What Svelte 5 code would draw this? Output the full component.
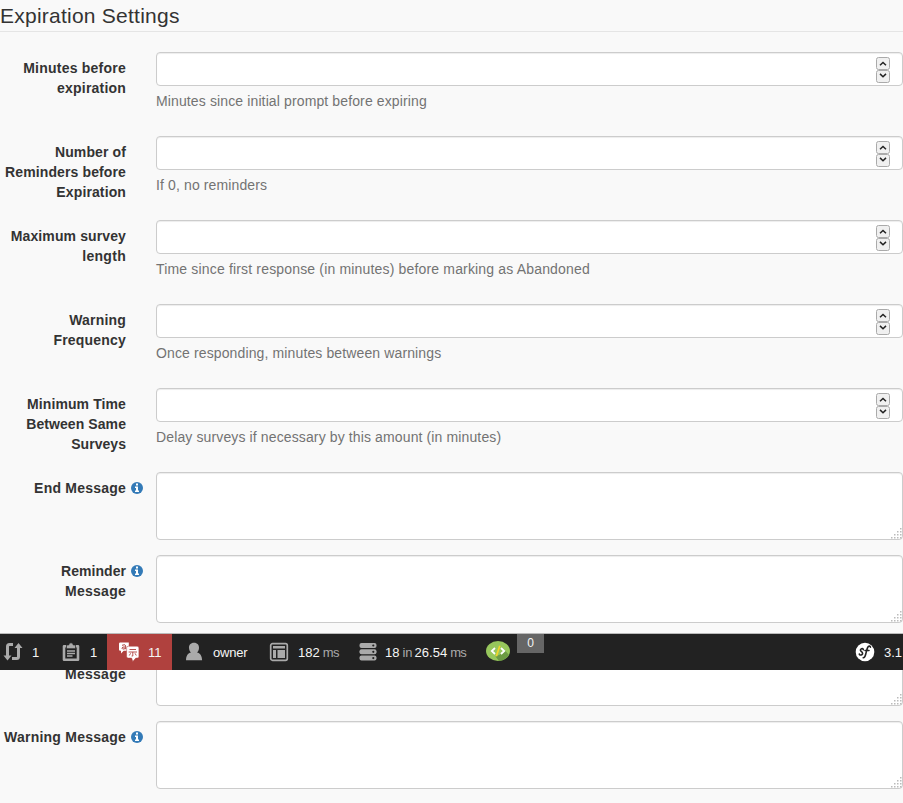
<script>
  const numbers = [
    { label: ['Minutes before', 'expiration'], help: 'Minutes since initial prompt before expiring' },
    { label: ['Number of', 'Reminders before', 'Expiration'], help: 'If 0, no reminders' },
    { label: ['Maximum survey', 'length'], help: 'Time since first response (in minutes) before marking as Abandoned' },
    { label: ['Warning', 'Frequency'], help: 'Once responding, minutes between warnings' },
    { label: ['Minimum Time', 'Between Same', 'Surveys'], help: 'Delay surveys if necessary by this amount (in minutes)' }
  ];
  const messages = [
    { label: ['End Message'], info: true },
    { label: ['Reminder', 'Message'], info: true },
    { label: ['\u00a0', 'Message'], info: false },
    { label: ['Warning Message'], info: true }
  ];
  const tracking = {
    'Minutes before': 0.23, 'expiration': 0.2, 'Number of': 0.12, 'Reminders before': 0.12,
    'Expiration': 0.12, 'Maximum survey': 0.12, 'length': 0.3, 'Warning': 0.2, 'Frequency': 0.2,
    'Minimum Time': 0.1, 'Between Same': 0.08, 'Surveys': 0.05, 'End Message': 0.22,
    'Reminder': 0.05, 'Message': 0.26, 'Warning Message': 0.23
  };
</script>

<main>
  <h2>Expiration Settings</h2>
  <form>
    {#each numbers as row}
      <div class="group number">
        <div class="label">{#each row.label as line}<span style:letter-spacing={`${tracking[line] ?? 0}px`}>{line}</span>{/each}</div>
        <div class="gutter"></div>
        <div class="field">
          <div class="input">
            <svg width="14" height="26" viewBox="0 0 14 26">
              <rect x=".5" y=".5" width="13" height="12" rx="2" fill="#f0f0f0" stroke="#aaa" />
              <rect x=".5" y="13.5" width="13" height="12" rx="2" fill="#f0f0f0" stroke="#aaa" />
              <path d="M4 8.300 7 5.500 10 8.300M4 16.900 7 19.700 10 16.900" fill="none" stroke="#222" stroke-width="1.5" />
            </svg>
          </div>
          <p class:long={row.help.length > 60}>{row.help}</p>
        </div>
      </div>
    {/each}
    {#each messages as row}
      <div class="group message">
        <div class="label">{#each row.label as line}<span style:letter-spacing={`${tracking[line] ?? 0}px`}>{line}</span>{/each}</div>
        <div class="gutter">
          {#if row.info}
            <svg width="12" height="12" viewBox="0 0 12 12">
              <circle cx="6" cy="6" r="6" fill="#337ab7" />
              <path d="M5 1.500h2v2H5zM4 4.500h3v4h1v1.500H4V8.500h1V6H4z" fill="#fff" />
            </svg>
          {/if}
        </div>
        <div class="field">
          <div class="area">
            <svg width="11" height="11" viewBox="0 0 11 11" fill="#bbb">
              <path d="M9 0h1.500v1.500H9zM9 3h1.500v1.500H9zM6 3h1.500v1.500H6zM9 6h1.500v1.500H9zM6 6h1.500v1.500H6zM3 6h1.500v1.500H3zM9 9h1.500v1.500H9zM6 9h1.500v1.500H6zM3 9h1.500v1.500H3zM0 9h1.500v1.500H0z" />
            </svg>
          </div>
        </div>
      </div>
    {/each}
  </form>
</main>

<footer>
  <div class="item" style:width="54px">
    <svg style:margin-left="3px" width="20" height="20" viewBox="0 0 20 20" fill="none" stroke="#aaa" stroke-width="3">
      <path d="M10 2.500H6.500Q4.500 2.500 4.500 4.500V14M9 16.500h4.500q2 0 2-2V5" />
      <path d="M.5 13.500h8L4.500 18.500zM11.500 6h8L15.500 1z" fill="#aaa" stroke="none" />
    </svg>
    <b style:margin-left="9px">1</b>
  </div>
  <div class="item" style:width="53px">
    <svg style:margin-left="7px" width="20" height="20" viewBox="0 0 20 20">
      <path d="M3 4.200h14v13.500H3z" fill="none" stroke="#aaa" stroke-width="2.600" stroke-linejoin="round" />
      <path d="M5.500 6.700V3h2.200Q8 .8 10 .8T12.300 3h2.200v3.700z" fill="#aaa" stroke="#222" stroke-width=".7" />
      <path d="M6 9h8M6 11.500h8M6 14h5.500" stroke="#aaa" stroke-width="1.3" />
    </svg>
    <b style:margin-left="9px">1</b>
  </div>
  <div class="item red" style:width="65px">
    <svg style:margin-left="12px" width="20" height="20" viewBox="0 0 20 20">
      <path d="M1.200.5h8.600v8.300H4.700L2 11.500V8.800H1.200Q0 8.800 0 7.500V1.700Q0 .5 1.200.5z" fill="#fff" />
      <path d="M3 3.300q3.600-1.600 3.700.7v3.200M6.500 5Q2.900 4.600 2.900 6.200T6.500 6.600" fill="none" stroke="#b0413e" stroke-width="1" />
      <path d="M9.300 4.200h8.900q1.700 0 1.700 1.700v8.500q0 1.700-1.700 1.700h-1.400l-3 3.300-1.200-3.300H9.300q-1.700 0-1.700-1.700V5.900q0-1.700 1.700-1.700z" fill="#fff" stroke="#b0413e" stroke-width=".5" />
      <path d="M10.500 7.500h6.500M9.600 10h8.400M13.800 10v4h-1.200M11.600 11.300l-1.300 2.200M16 11.300l1.300 2.200" fill="none" stroke="#b0413e" stroke-width=".9" />
    </svg>
    <b style:margin-left="9px">11</b>
  </div>
  <div class="item" style:width="87px">
    <svg style:margin-left="12px" width="20" height="20" viewBox="0 0 20 20">
      <path d="M10 .7c3.400 0 5.200 2.300 5 5.200-.1 2-1 3.500-2 4.600 3 .7 4.900 3 5.100 7.700H2c.1-4.700 2-7 5-7.700-1-1.100-1.900-2.600-2-4.600C4.800 3 6.600.7 10 .7z" fill="#aaa" />
    </svg>
    <b style:margin-left="9px" style:letter-spacing="-.2px">owner</b>
  </div>
  <div class="item" style:width="89px">
    <svg style:margin-left="10px" width="20" height="20" viewBox="0 0 20 20">
      <rect x="1.700" y="1.700" width="16.600" height="16.600" rx="1.800" fill="none" stroke="#aaa" stroke-width="1.700" />
      <path d="M4 4h12v2.500H4zM4 8h3v8H4zM8.500 8H16v8H8.500z" fill="#aaa" />
    </svg>
    <b style:margin-left="9px">182</b><i class="ms">ms</i>
  </div>
  <div class="item" style:width="129px">
    <svg style:margin-left="10px" width="20" height="20" viewBox="0 0 20 20">
      <g fill="#aaa"><rect x="1.500" y="1" width="17" height="5" rx="2" /><rect x="1.500" y="7.300" width="17" height="5" rx="2" /><rect x="1.500" y="13.600" width="17" height="5" rx="2" /></g>
      <g fill="#222"><circle cx="15.300" cy="3.500" r="1.100" /><circle cx="15.300" cy="9.800" r="1.100" /><circle cx="15.300" cy="16.100" r="1.100" /></g>
    </svg>
    <b style:margin-left="7px">18</b><i class="in">in</i><b>26.54</b><i class="ms">ms</i>
  </div>
  <div class="item" style:width="40px">
    <svg style:margin-left="9px" style:margin-bottom="2px" width="24" height="20" viewBox="0 0 24 20">
      <ellipse cx="12" cy="10" rx="12" ry="10" fill="#97c75c" />
      <path d="m14 13.500 5.500-3.500L23 14q-3.500 5.600-10 6L9.500 15.500z" fill="#6c9b43" />
      <path d="M9 7 5.800 10 9 13M15 7l3.200 3-3.200 3" fill="none" stroke="#fff" stroke-width="1.800" />
      <path d="M13.800 4.800 10.300 15.300" stroke="#f3d52b" stroke-width="1.700" />
    </svg>
  </div>
  <div class="badge">0</div>
  <div class="item end">
    <svg width="20" height="20" viewBox="0 0 20 20">
      <circle cx="10" cy="10" r="9.300" fill="#fff" />
      <path d="M8.300 7.600Q8 6.300 6.600 6.800C4.800 7.500 5.300 8.800 6.500 9.700s1.600 2.300.3 3-2.600.2-2.500-.7M15.500 5.100c-.2-1.400-2-1.300-2.800.2-.8 1.500-1.300 4.300-2 7-.6 2.500-1.300 3.700-2.500 3.500M10 8.500h4" fill="none" stroke="#222" stroke-width="1.600" stroke-linecap="round" />
    </svg>
    <b style:margin-left="9px">3.1</b>
  </div>
</footer>

<style>
  :global(body) { background: #f9f9f9; overflow: hidden; }
  main { height: 803px; overflow: hidden; color: #333; font: 14px/20px "Liberation Sans", Arial, sans-serif; }
  h2 { box-sizing: border-box; height: 32px; margin: 0 0 20px; padding-top: 1px; border-bottom: 1px solid #e5e5e5; font-size: 21px; line-height: 30px; font-weight: 400; letter-spacing: .24px; white-space: nowrap; }
  .group { display: flex; }
  .number { height: 84px; }
  .message { height: 83px; }
  .label { width: 126px; padding-top: 6px; text-align: right; font-weight: 700; }
  .label span { display: block; white-space: nowrap; }
  .gutter { width: 30px; box-sizing: border-box; padding: 10px 0 0 5px; }
  .gutter svg { display: block; }
  .field { flex: 1; }
  .input, .area { display: flex; box-sizing: border-box; justify-content: flex-end; background: #fff; border: 1px solid #ccc; border-radius: 4px; box-shadow: inset 0 1px 1px rgba(0, 0, 0, .075); }
  .input { height: 34px; align-items: center; padding-right: 12px; }
  .input svg { position: relative; top: .5px; }
  .area { height: 68px; align-items: flex-end; }
  p { margin: 5px 0 0; color: #737373; letter-spacing: .125px; white-space: nowrap; }
  .long { letter-spacing: .168px; }
  footer { position: fixed; left: 0; right: 0; top: 633px; height: 36px; border-top: 1px solid #bbb; display: flex; background: #222; color: #f5f5f5; font: 13px/36px "Liberation Sans", Arial, sans-serif; overflow: hidden; }
  .item { display: flex; align-items: center; flex: none; white-space: nowrap; }
  .item svg { flex: none; }
  .red { background: #b0413e; }
  b { font-weight: 400; padding-top: 2px; }
  i { font-style: normal; color: #aaa; margin-left: 3px; padding-top: 2px; }
  .in { margin-right: 2px; }
  .ms { letter-spacing: -.6px; }
  .badge { width: 27px; height: 19px; background: #666; text-align: center; font-size: 12px; line-height: 19px; }
  .end { margin-left: auto; margin-right: 1px; }
</style>
